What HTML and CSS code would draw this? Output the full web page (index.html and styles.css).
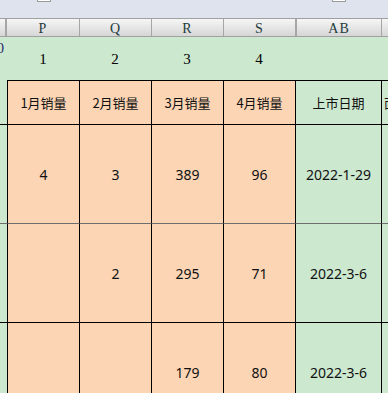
FILE: index.html
```html
<!DOCTYPE html>
<html lang="zh-CN">
<head>
<meta charset="utf-8">
<link rel="stylesheet" href="styles.css">
</head>
<body>
<div class="sheet">
  <div class="topbar">
    <span class="grpbox grpbox-a"></span>
    <span class="grpbox grpbox-b"></span>
  </div>
  <div class="colhead">
    <div class="ch ch-first"></div>
    <div class="ch">P</div>
    <div class="ch">Q</div>
    <div class="ch">R</div>
    <div class="ch">S</div>
    <div class="ch ch-ab">AB</div>
    <div class="ch"></div>
  </div>
  <div class="grid">
    <!-- number row -->
    <div class="c g num-row edge-left"><span class="clip">0</span></div>
    <div class="c g num-row">1</div>
    <div class="c g num-row">2</div>
    <div class="c g num-row">3</div>
    <div class="c g num-row">4</div>
    <div class="c g num-row"></div>
    <div class="c g num-row"></div>

    <!-- header row -->
    <div class="c g hd"></div>
    <div class="c p hd bl bt">1月销量</div>
    <div class="c p hd bl bt">2月销量</div>
    <div class="c p hd bl bt">3月销量</div>
    <div class="c p hd bl bt">4月销量</div>
    <div class="c g hd bl bt">上市日期</div>
    <div class="c g hd bl bt left">面</div>

    <!-- data row 1 -->
    <div class="c g dr bt"></div>
    <div class="c p dr bl bt">4</div>
    <div class="c p dr bl bt">3</div>
    <div class="c p dr bl bt">389</div>
    <div class="c p dr bl bt">96</div>
    <div class="c g dr bl bt">2022-1-29</div>
    <div class="c g dr bl bt"></div>

    <!-- data row 2 -->
    <div class="c g dr bt freeze"></div>
    <div class="c p dr bl bt freeze"></div>
    <div class="c p dr bl bt freeze">2</div>
    <div class="c p dr bl bt freeze">295</div>
    <div class="c p dr bl bt freeze">71</div>
    <div class="c g dr bl bt freeze">2022-3-6</div>
    <div class="c g dr bl bt freeze"></div>

    <!-- data row 3 -->
    <div class="c g dr bt"></div>
    <div class="c p dr bl bt"></div>
    <div class="c p dr bl bt"></div>
    <div class="c p dr bl bt">179</div>
    <div class="c p dr bl bt">80</div>
    <div class="c g dr bl bt">2022-3-6</div>
    <div class="c g dr bl bt"></div>
  </div>
</div>
</body>
</html>
```
FILE: styles.css
```css
html, body {
  margin: 0;
  padding: 0;
  background: #cce8cf;
}
body {
  width: 388px;
  height: 393px;
  overflow: hidden;
}
.sheet {
  width: 388px;
  height: 393px;
  overflow: hidden;
}
.topbar {
  height: 18px;
  background: #dfe3ee;
  display: flex;
  align-items: flex-start;
}
.grpbox {
  display: block;
  width: 12px;
  height: 1px;
  background: #ffffff;
  border: 1px solid #9a9a9a;
  border-top: none;
}
.grpbox-a { margin-left: 37px; }
.grpbox-b { margin-left: 281px; }

.colhead {
  display: grid;
  grid-template-columns: 7px 72px 72px 72px 72px 86px 40px;
  height: 19px;
  box-sizing: border-box;
  border-top: 1px solid #a0a0a0;
  border-bottom: 1px solid #a0a0a0;
  background: linear-gradient(#f6f6f6, #d6d6d6);
}
.ch {
  box-sizing: border-box;
  border-left: 1px solid #a6a6a6;
  font-family: "Liberation Serif", "DejaVu Serif", serif;
  font-size: 14px;
  color: #243c3c;
  display: flex;
  align-items: center;
  justify-content: center;
  padding-top: 3px;
  line-height: 14px;
  letter-spacing: 1px;
}
.ch-first {
  border-left: none;
  border-right: 2px solid #a6a6a6;
}
.ch-first + .ch { border-left: none; }
.ch-ab { border-left: 2px solid #a6a6a6; }

.grid {
  display: grid;
  grid-template-columns: 7px 72px 72px 72px 72px 86px 40px;
  grid-template-rows: 43px 44px 99px 99px 99px;
}
.c {
  box-sizing: border-box;
  display: flex;
  align-items: center;
  justify-content: center;
  overflow: hidden;
  white-space: nowrap;
  color: #111;
}
.g { background: #cce8cf; }
.p { background: #fcd5b4; }
.bl { border-left: 1px solid #000; }
.bt { border-top: 1px solid #000; }
.bt.freeze { border-top-color: #6e6e6e; }
.left { justify-content: flex-start; padding-left: 2px; }

.num-row {
  font-family: "Liberation Serif", "DejaVu Serif", serif;
  font-size: 15px;
  color: #000;
  padding-top: 1px;
}
.edge-left {
  justify-content: flex-end;
  align-items: flex-start;
}
.clip {
  color: #1a1a6a;
  font-size: 14px;
  margin-right: 3px;
  margin-top: 4px;
  line-height: 14px;
}
.hd {
  font-family: "Noto Sans CJK SC", "Noto Sans", sans-serif;
  font-size: 13px;
}
.dr {
  font-family: "Noto Sans", "Noto Sans CJK SC", sans-serif;
  font-size: 14px;
}
```
